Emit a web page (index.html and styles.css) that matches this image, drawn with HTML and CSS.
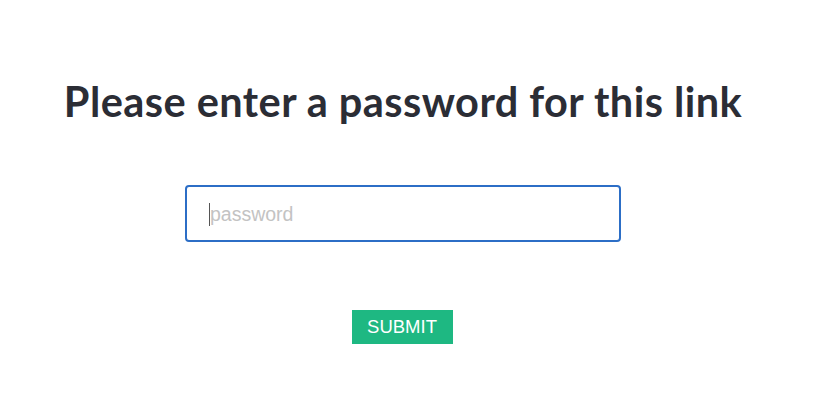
FILE: index.html
```html
<!DOCTYPE html>
<html>
<head>
<meta charset="utf-8">
<link rel="stylesheet" href="styles.css">
</head>
<body>
<div class="page">
  <h1 class="title">Please enter a password for this link</h1>
  <div class="field">
    <input class="pw" type="password" placeholder="password">
    <span class="caret"></span>
  </div>
  <button class="submit">SUBMIT</button>
</div>
</body>
</html>
```
FILE: styles.css
```css
html, body {
  margin: 0;
  padding: 0;
  background: #ffffff;
}
.page {
  width: 806px;
  display: flex;
  flex-direction: column;
  align-items: center;
  padding-top: 74px;
}
.title {
  margin: 0;
  font-family: Lato, "Noto Sans", sans-serif;
  font-weight: 700;
  font-size: 41.5px;
  line-height: 54px;
  color: #2b2d35;
  letter-spacing: 0.45px;
}
.field {
  position: relative;
  margin-top: 57px;
}
.pw {
  box-sizing: border-box;
  width: 436px;
  height: 57px;
  border: 2px solid #2c6ec6;
  border-radius: 4px;
  padding: 2px 0 0 23px;
  font-family: "Liberation Sans", Arial, sans-serif;
  font-size: 19.5px;
  color: #333;
  outline: none;
  display: block;
}
.pw::placeholder {
  color: #c3c3c3;
}
.caret {
  position: absolute;
  left: 24px;
  top: 18px;
  width: 1px;
  height: 23px;
  background: #555;
}
.submit {
  margin-top: 68px;
  margin-right: 2px;
  width: 101px;
  height: 34px;
  border: none;
  border-radius: 0;
  background: #1eb882;
  color: #ffffff;
  font-family: "Liberation Sans", Arial, sans-serif;
  font-size: 18.5px;
  padding: 0;
  cursor: pointer;
}
```
